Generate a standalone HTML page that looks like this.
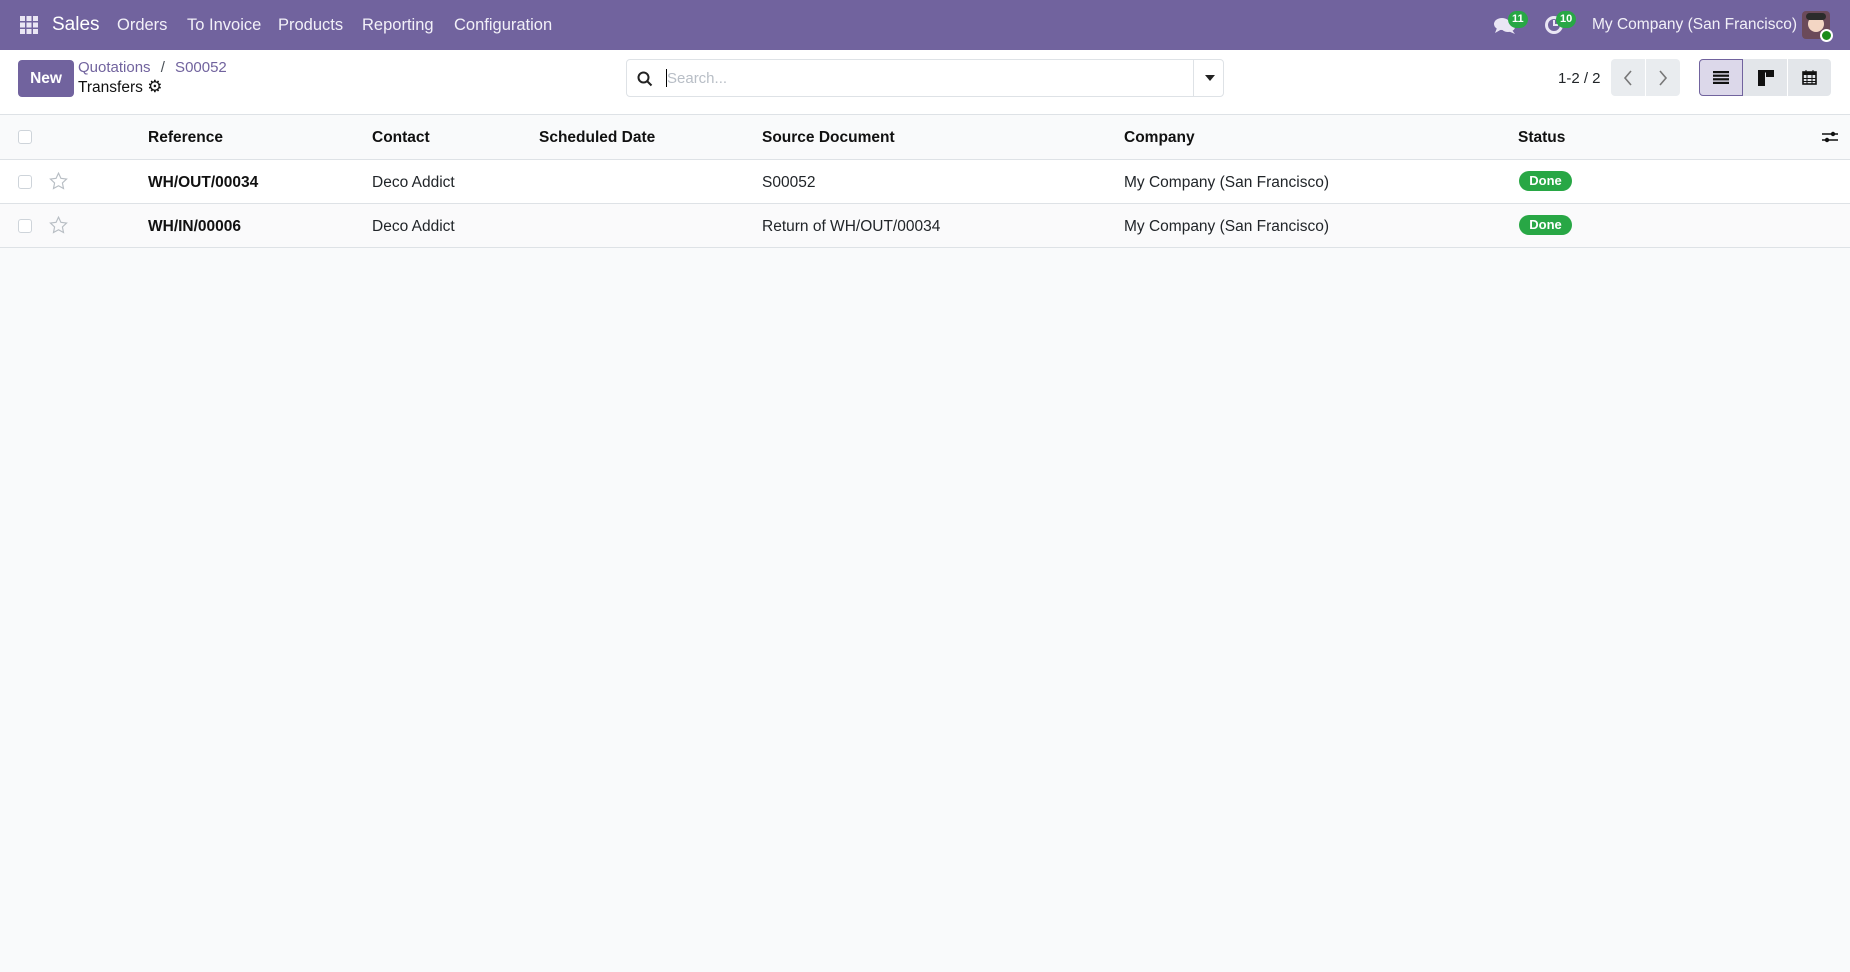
<!DOCTYPE html>
<html><head><meta charset="utf-8"><style>
*{box-sizing:border-box;margin:0;padding:0}
body{width:1850px;height:972px;background:#f9fafb;font-family:"Liberation Sans",sans-serif;color:#212529;font-size:15.5px;position:relative;overflow:hidden}
.nav{position:absolute;left:0;top:0;width:1850px;height:50px;background:#71639e;color:#fff}
.nav span{position:absolute;top:16px;font-size:16.5px;color:#f2f0f8}
.cp{position:absolute;left:0;top:50px;width:1850px;height:65px;background:#fff;border-bottom:1px solid #dee2e6}
.abs{position:absolute}
.btn{background:#71639e;color:#fff;font-weight:bold;border-radius:4px;text-align:center}
table{position:absolute;left:0;top:115px;width:1850px;border-collapse:collapse}
td{height:44px;border-bottom:1px solid #dee2e6;position:relative}
.cell{position:absolute;top:14px;white-space:nowrap}
.cb{position:absolute;left:18px;top:15px;width:14px;height:14px;border:1px solid #ced4da;border-radius:3px;background:#fff}
.done{position:absolute;left:1519px;top:11px;width:53px;height:20px;border-radius:10px;background:#28a745;color:#fff;font-size:13px;font-weight:bold;text-align:center;line-height:20px}
.badge{position:absolute;background:#28a745;color:#fff;font-size:11px;font-weight:bold;border-radius:9px;height:17px;line-height:17px;padding:0 4px}
</style></head><body>
<div class="nav">
<svg class="abs" style="left:20px;top:16px" width="18" height="18" viewBox="0 0 18 18" fill="#eae6f4"><rect x="0" y="0" width="5" height="5"/><rect x="6.5" y="0" width="5" height="5"/><rect x="13" y="0" width="5" height="5"/><rect x="0" y="6.5" width="5" height="5"/><rect x="6.5" y="6.5" width="5" height="5"/><rect x="13" y="6.5" width="5" height="5"/><rect x="0" y="13" width="5" height="5"/><rect x="6.5" y="13" width="5" height="5"/><rect x="13" y="13" width="5" height="5"/></svg>
<span style="left:52px;top:14px;font-size:19px;color:#fff">Sales</span>
<span style="left:117px">Orders</span>
<span style="left:187px">To Invoice</span>
<span style="left:278px">Products</span>
<span style="left:362px">Reporting</span>
<span style="left:454px">Configuration</span>
<svg class="abs" style="left:1494px;top:17px" width="22" height="18" viewBox="0 0 22 18" fill="#eae6f4"><ellipse cx="8" cy="7" rx="8" ry="6"/><path d="M3 11 L1 16 L8 12Z"/><ellipse cx="14" cy="10" rx="7" ry="5"/><path d="M18 13 L21 17 L14 14Z"/></svg>
<div class="badge" style="left:1508px;top:11px">11</div>
<svg class="abs" style="left:1544px;top:15px" width="20" height="20" viewBox="0 0 20 20"><circle cx="10" cy="10" r="7.5" fill="none" stroke="#eae6f4" stroke-width="3"/><path d="M10 5v5h4" stroke="#eae6f4" stroke-width="2" fill="none"/></svg>
<div class="badge" style="left:1556px;top:11px">10</div>
<span style="left:1592px;font-size:15.5px;top:16px">My Company (San Francisco)</span>
<div class="abs" style="left:1802px;top:11px;width:28px;height:28px;border-radius:4px;background:#6b4a5a"><div style="position:absolute;left:6px;top:5px;width:16px;height:16px;border-radius:50%;background:#f3d6c4"></div><div style="position:absolute;left:4px;top:2px;width:20px;height:7px;background:#2b2b2b;border-radius:4px"></div></div>
<div class="abs" style="left:1820px;top:29px;width:13px;height:13px;border-radius:50%;background:#1a8c1a;border:2px solid #fff"></div>
</div>
<div class="cp">
<div class="abs btn" style="left:18px;top:10px;width:56px;height:37px;line-height:37px;font-size:15.5px">New</div>
<div class="abs" style="left:78px;top:9px;color:#71639e;font-size:15px">Quotations <span style="color:#495057;margin:0 6px">/</span> S00052</div>
<div class="abs" style="left:78px;top:29px;font-size:15.5px;color:#111">Transfers <span style="font-size:17px;line-height:15px">⚙</span></div>
<div class="abs" style="left:626px;top:9px;width:598px;height:38px;border:1px solid #dee2e6;border-radius:4px;background:#fff">
<svg class="abs" style="left:10px;top:11px" width="16" height="16" viewBox="0 0 16 16"><circle cx="6.5" cy="6.5" r="5" fill="none" stroke="#222" stroke-width="2"/><path d="M10 10 L14.5 14.5" stroke="#222" stroke-width="2"/></svg>
<div class="abs" style="left:39px;top:9px;width:1px;height:18px;background:#000"></div>
<div class="abs" style="left:40px;top:10px;color:#b8bec6;font-size:15px">Search...</div>
<div class="abs" style="left:566px;top:0;width:1px;height:36px;background:#dee2e6"></div>
<div class="abs" style="left:578px;top:15px;width:0;height:0;border-left:5px solid transparent;border-right:5px solid transparent;border-top:6px solid #222"></div>
</div>
<div class="abs" style="left:1558px;top:20px;font-size:15px">1-2 / 2</div>
<div class="abs" style="left:1611px;top:9px;width:69px;height:37px;background:#e9ecef;border-radius:4px"><div class="abs" style="left:34px;top:0;width:1px;height:37px;background:#fff"></div>
<svg class="abs" style="left:11px;top:11px" width="12" height="16" viewBox="0 0 12 16"><path d="M9 1 L3 8 L9 15" fill="none" stroke="#777" stroke-width="1.6"/></svg>
<svg class="abs" style="left:46px;top:11px" width="12" height="16" viewBox="0 0 12 16"><path d="M3 1 L9 8 L3 15" fill="none" stroke="#777" stroke-width="1.6"/></svg></div>
<div class="abs" style="left:1699px;top:9px;width:132px;height:37px;background:#e3e6ea;border-radius:4px">
<div class="abs" style="left:0;top:0;width:44px;height:37px;background:#dcd8ea;border:1px solid #71639e;border-radius:4px 0 0 4px"></div>
<div class="abs" style="left:88px;top:0;width:1px;height:37px;background:#fff"></div>
<svg class="abs" style="left:14px;top:12px" width="16" height="13" viewBox="0 0 16 13" fill="#111"><rect y="0" width="16" height="2.2"/><rect y="3.6" width="16" height="2.2"/><rect y="7.2" width="16" height="2.2"/><rect y="10.8" width="16" height="2.2"/></svg>
<svg class="abs" style="left:59px;top:11px" width="16" height="16" viewBox="0 0 16 16" fill="#111"><rect x="0" y="0" width="7" height="16"/><rect x="8" y="0" width="8" height="7"/><rect x="0" y="0" width="16" height="2.5"/></svg>
<svg class="abs" style="left:103px;top:10px" width="15" height="16" viewBox="0 0 15 16"><rect x="1" y="3" width="13" height="12" fill="none" stroke="#111" stroke-width="1.6"/><rect x="1" y="3" width="13" height="3" fill="#111"/><path d="M4 1v4M11 1v4M1 9.5h13M1 12.5h13M5 6v9M10 6v9" stroke="#111" stroke-width="1"/></svg>
</div>
</div>
<table>
<tr style="background:#f9fafb"><td><div class="cb"></div>
<div class="cell" style="left:148px;font-weight:bold;color:#111">Reference</div>
<div class="cell" style="left:372px;font-weight:bold;color:#111">Contact</div>
<div class="cell" style="left:539px;font-weight:bold;color:#111">Scheduled Date</div>
<div class="cell" style="left:762px;font-weight:bold;color:#111">Source Document</div>
<div class="cell" style="left:1124px;font-weight:bold;color:#111">Company</div>
<div class="cell" style="left:1518px;font-weight:bold;color:#111">Status</div>
<svg class="abs" style="left:1822px;top:15px" width="16" height="14" viewBox="0 0 16 14"><path d="M0 4h16M0 10h16" stroke="#111" stroke-width="1.6"/><circle cx="11" cy="4" r="2.2" fill="#111"/><circle cx="5" cy="10" r="2.2" fill="#111"/></svg>
</td></tr>
<tr style="background:#fff"><td><div class="cb"></div>
<svg class="abs" style="left:49px;top:12px" width="19" height="18" viewBox="0 0 24 23"><path d="M12 1.5l3.1 6.6 7.2.9-5.3 5 1.4 7.1L12 17.6 5.6 21.1 7 14 1.7 9l7.2-.9z" fill="none" stroke="#b8bec4" stroke-width="1.5"/></svg>
<div class="cell" style="left:148px;font-weight:bold;color:#111">WH/OUT/00034</div>
<div class="cell" style="left:372px">Deco Addict</div>
<div class="cell" style="left:762px">S00052</div>
<div class="cell" style="left:1124px">My Company (San Francisco)</div>
<div class="done">Done</div></td></tr>
<tr style="background:#fafafb"><td><div class="cb"></div>
<svg class="abs" style="left:49px;top:12px" width="19" height="18" viewBox="0 0 24 23"><path d="M12 1.5l3.1 6.6 7.2.9-5.3 5 1.4 7.1L12 17.6 5.6 21.1 7 14 1.7 9l7.2-.9z" fill="none" stroke="#b8bec4" stroke-width="1.5"/></svg>
<div class="cell" style="left:148px;font-weight:bold;color:#111">WH/IN/00006</div>
<div class="cell" style="left:372px">Deco Addict</div>
<div class="cell" style="left:762px">Return of WH/OUT/00034</div>
<div class="cell" style="left:1124px">My Company (San Francisco)</div>
<div class="done">Done</div></td></tr>
</table>
</body></html>
